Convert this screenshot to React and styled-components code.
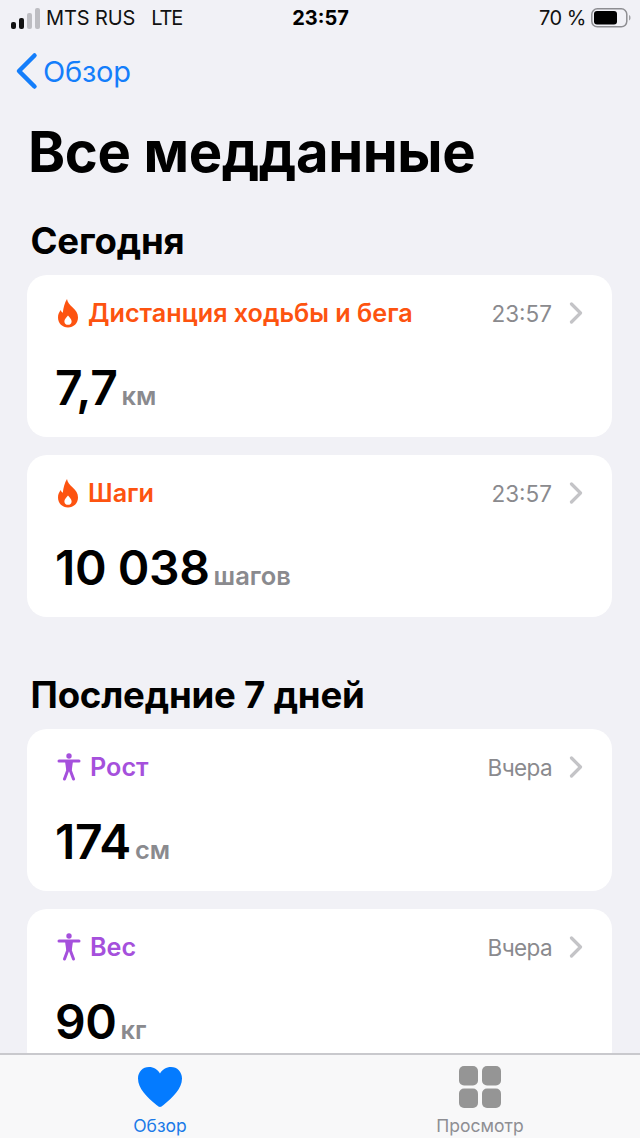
import React from "react";
import styled, { createGlobalStyle } from "styled-components";

const Global = createGlobalStyle`
  html, body { margin: 0; padding: 0; background: #f1f1f6; }
  * { box-sizing: border-box; }
`;

const Screen = styled.div`
  position: relative;
  width: 640px;
  height: 1138px;
  overflow: hidden;
  background: #f1f1f6;
  font-family: Inter, "Noto Sans", sans-serif;
  color: #000;
`;

const StatusBar = styled.div`
  height: 36px;
  padding: 0 9px 0 10px;
  display: grid;
  grid-template-columns: 1fr auto 1fr;
  align-items: center;
  font-size: 20px;
  line-height: 36px;
`;

const Carrier = styled.div`
  display: flex;
  align-items: center;
  gap: 6px;
  letter-spacing: -0.1px;
  color: #111;
`;

const CarrierType = styled.span`
  margin-left: 10px;
  letter-spacing: -1.2px;
`;

const Clock = styled.div`
  font-weight: 700;
  font-size: 20px;
`;

const BatteryBox = styled.div`
  display: flex;
  justify-content: flex-end;
  align-items: center;
  gap: 5px;
  color: #111;
  letter-spacing: -0.5px;
`;

const NavBar = styled.div`
  height: 58px;
  padding: 12px 0 0 15px;
  display: flex;
  align-items: center;
  gap: 5px;
  color: #147efb;
  font-size: 29px;
  font-weight: 400;
  letter-spacing: -0.2px;
`;

const Title = styled.h1`
  margin: 27px 0 0 28px;
  font-size: 56.2px;
  line-height: 62px;
  font-weight: 700;
  letter-spacing: -0.4px;
`;

const Section = styled.section`
  padding: 0 28px 0 27px;
  display: flex;
  flex-direction: column;
  gap: 18px;
`;

const SectionTitle = styled.h2`
  margin: 0 0 -4px 3.5px;
  font-size: 36.6px;
  line-height: 40px;
  font-weight: 700;
  letter-spacing: -0.2px;
`;

const Card = styled.div`
  height: 162px;
  background: #fff;
  border-radius: 20px;
  padding: 21px 29px 0 28px;
  display: flex;
  flex-direction: column;
`;

const CardHead = styled.div`
  display: flex;
  align-items: center;
  height: 34px;
`;

const Label = styled.div`
  flex: 1;
  display: flex;
  align-items: center;
  gap: 9px;
  padding-left: 2px;
  font-size: 25.2px;
  font-weight: 600;
  color: ${(p) => p.$color};
`;

const When = styled.div`
  font-size: 22.5px;
  color: #8a8a8e;
  margin-right: 17px;
  letter-spacing: ${(p) => (p.$tight ? "-0.6px" : "0")};
`;

const Reading = styled.div`
  margin-top: 30px;
  display: flex;
  align-items: baseline;
  gap: 4px;
  line-height: 56px;
`;

const Value = styled.span`
  font-size: 48px;
  font-weight: 600;
  letter-spacing: -0.4px;
`;

const Unit = styled.span`
  font-size: 25.5px;
  font-weight: 600;
  color: #8a8a8e;
`;

const TabBar = styled.div`
  position: absolute;
  left: 0;
  right: 0;
  bottom: 0;
  height: 85px;
  border-top: 2px solid #c9c9cd;
  background: #f8f8f9;
  display: grid;
  grid-template-columns: 1fr 1fr;
  padding: 10px 0 0 0;
`;

const Tab = styled.div`
  display: flex;
  flex-direction: column;
  align-items: center;
  gap: 6px;
  font-size: 17.5px;
  line-height: 22px;
  color: ${(p) => p.$color};
`;

const TabIcon = styled.div`
  height: 44px;
  display: flex;
  align-items: center;
`;

const Spacer = styled.div`
  height: ${(p) => p.$h}px;
`;

const Signal = () => (
  <svg width="30" height="24" viewBox="0 0 30 24">
    <rect x="1" y="16" width="5" height="7" rx="2" fill="#111" />
    <rect x="9" y="12" width="5" height="11" rx="2" fill="#111" />
    <rect x="17" y="7" width="5" height="16" rx="2" fill="#bdbdc2" />
    <rect x="25" y="2" width="5" height="21" rx="2" fill="#bdbdc2" />
  </svg>
);

const Battery = () => (
  <svg width="40" height="22" viewBox="0 0 40 22">
    <rect x="0.8" y="1.800" width="35" height="18" rx="5.500" fill="none" stroke="#8e8e92" strokeWidth="1.500" />
    <rect x="3" y="4" width="23" height="13.500" rx="3" fill="#000" />
    <path d="M38 8v5.500c1-.4 1.500-1.500 1.500-2.750S39 8.400 38 8z" fill="#a0a0a4" />
  </svg>
);

const BackChevron = () => (
  <svg width="23" height="38" viewBox="0 0 23 38">
    <path d="M19.500 3.500 4 19l15.500 15.500" fill="none" stroke="#147efb" strokeWidth="4.500" strokeLinecap="round" strokeLinejoin="round" />
  </svg>
);

const Flame = () => (
  <svg width="22" height="30" viewBox="0 0 22 30">
    <path
      fillRule="evenodd"
      fill="#fd5310"
      d="M10 1c.6 3.500 2.600 5.600 5.700 8.600C18.900 12.700 21 15.500 21 19.500 21 25.200 16.600 29.500 11 29.500S1 25.200 1 19.500c0-3 1-5.300 2.800-7.500.4 1.300 1 2.200 2 2.700C6.400 9.500 7.600 5 10 1zM11 17.500c-2.200 2.400-3.600 4.200-3.600 5.900 0 2.100 1.600 3.400 3.600 3.400s3.600-1.300 3.600-3.400c0-1.700-1.400-3.500-3.600-5.900z"
    />
  </svg>
);

const Figure = () => (
  <svg width="24" height="28" viewBox="0 0 24 28">
    <circle cx="12" cy="3" r="2.700" fill="#a550dc" />
    <path
      d="M2 8h20M12 14L7.500 26M12 14l4.500 12"
      fill="none"
      stroke="#a550dc"
      strokeWidth="3"
      strokeLinecap="round"
    />
    <path d="M8 8h8l-1.200 9H9.200z" fill="#a550dc" />
  </svg>
);

const Chevron = () => (
  <svg width="14" height="22" viewBox="0 0 14 22">
    <path d="M2.500 2 11.500 11 2.500 20" fill="none" stroke="#c4c4c7" strokeWidth="3.200" strokeLinecap="round" strokeLinejoin="round" />
  </svg>
);

const Heart = () => (
  <svg width="44" height="40" viewBox="0 0 44 40">
    <path
      fill="#047bff"
      d="M22 40c-1 0-2-.7-3.500-2C9 30 0 21.500 0 11.500 0 4.800 4.800 0 11 0c4.800 0 8.600 2.500 11 6.500C24.400 2.500 28.200 0 33 0c6.200 0 11 4.800 11 11.500C44 21.500 35 30 25.500 38c-1.500 1.300-2.500 2-3.500 2z"
    />
  </svg>
);

const Grid = () => (
  <svg width="42" height="42" viewBox="0 0 42 42">
    <rect x="0" y="0" width="19" height="19.500" rx="5" fill="#959595" />
    <rect x="23" y="0" width="19" height="19.500" rx="5" fill="#959595" />
    <rect x="0" y="22.500" width="19" height="19.500" rx="5" fill="#959595" />
    <rect x="23" y="22.500" width="19" height="19.500" rx="5" fill="#959595" />
  </svg>
);

const Metric = ({ icon, color, label, when, tight, value, unit }) => (
  <Card>
    <CardHead>
      <Label $color={color}>
        {icon}
        {label}
      </Label>
      <When $tight={tight}>{when}</When>
      <Chevron />
    </CardHead>
    <Reading>
      <Value>{value}</Value>
      <Unit>{unit}</Unit>
    </Reading>
  </Card>
);

const ORANGE = "#fd5310";
const PURPLE = "#a550dc";

export default function App() {
  return (
    <Screen>
      <Global />
      <StatusBar>
        <Carrier>
          <Signal />
          <span>MTS RUS</span>
          <CarrierType>LTE</CarrierType>
        </Carrier>
        <Clock>23:57</Clock>
        <BatteryBox>
          <span>70 %</span>
          <Battery />
        </BatteryBox>
      </StatusBar>
      <NavBar>
        <BackChevron />
        Обзор
      </NavBar>
      <Title>Все медданные</Title>
      <Spacer $h={38} />
      <Section>
        <SectionTitle>Сегодня</SectionTitle>
        <Metric icon={<Flame />} color={ORANGE} label="Дистанция ходьбы и бега" when="23:57" value="7,7" unit="км" />
        <Metric icon={<Flame />} color={ORANGE} label="Шаги" when="23:57" value="10 038" unit="шагов" />
      </Section>
      <Spacer $h={58} />
      <Section>
        <SectionTitle>Последние 7 дней</SectionTitle>
        <Metric icon={<Figure />} color={PURPLE} label="Рост" when="Вчера" tight value="174" unit="см" />
        <Metric icon={<Figure />} color={PURPLE} label="Вес" when="Вчера" tight value="90" unit="кг" />
      </Section>
      <TabBar>
        <Tab $color="#1a7ae8">
          <TabIcon>
            <Heart />
          </TabIcon>
          Обзор
        </Tab>
        <Tab $color="#8e8e93">
          <TabIcon>
            <Grid />
          </TabIcon>
          Просмотр
        </Tab>
      </TabBar>
    </Screen>
  );
}
